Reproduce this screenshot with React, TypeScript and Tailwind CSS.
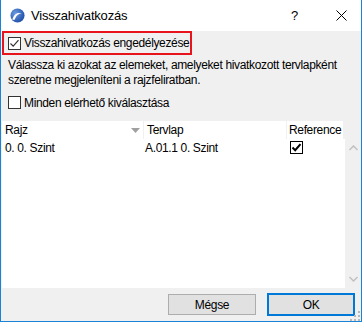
import type { FC } from 'react';

const font = { fontFamily: '"Liberation Sans", Arial, sans-serif' };

const CheckBox: FC<{ checked?: boolean; dark?: boolean }> = ({ checked, dark }) => (
  <span
    className={`flex h-[13px] w-[13px] shrink-0 items-center justify-center border bg-white ${
      dark ? 'border-black' : 'border-[#333333]'
    }`}
  >
    {checked && (
      <svg width="11" height="11" viewBox="0 0 11 11">
        <path
          d="M1.5 5.5 L4.2 8.2 L9.5 2.2"
          fill="none"
          stroke={dark ? '#000' : '#333'}
          strokeWidth={dark ? 2 : 1.2}
        />
      </svg>
    )}
  </span>
);

const AppIcon: FC = () => (
  <svg width="15" height="15" viewBox="0 0 16 16">
    <defs>
      <radialGradient id="g" cx="35%" cy="35%" r="70%">
        <stop offset="0" stopColor="#6a9be0" />
        <stop offset="1" stopColor="#1f4fa8" />
      </radialGradient>
    </defs>
    <circle cx="8" cy="8" r="7.5" fill="url(#g)" />
    <path d="M2.5 12.5 C4 6 9 3.5 13 6.5 C11 5.5 7.5 6 5 12.5 Z" fill="#ffffff" />
  </svg>
);

export default function App() {
  return (
    <div
      style={font}
      className="flex h-[322px] w-[362px] flex-col overflow-hidden whitespace-nowrap border-x border-b border-[#1883d7] bg-[#f0f0f0] text-[12px] tracking-[-0.35px] text-black"
    >
      {/* Title bar */}
      <div className="flex h-[31px] shrink-0 items-center bg-white">
        <span className="ml-[9px] flex">
          <AppIcon />
        </span>
        <span className="ml-[6px] text-[13px] leading-none tracking-[-0.2px]">Visszahivatkozás</span>
        <span className="ml-auto mr-[38px] text-[13px] leading-none">?</span>
        <svg width="11" height="11" viewBox="0 0 11 11" className="mr-[14px]">
          <path d="M0.5 0.5 L10.5 10.5 M10.5 0.5 L0.5 10.5" stroke="#000" strokeWidth="1" />
        </svg>
      </div>

      {/* Enable checkbox, highlighted */}
      <div className="ml-[1px] flex h-[24px] w-[190px] shrink-0 items-center gap-[3px] border-2 border-[#e8141c] pl-[4px]">
        <CheckBox checked />
        <span className="leading-none">Visszahivatkozás engedélyezése</span>
      </div>

      <p className="mt-[3px] ml-[7px] shrink-0 leading-[15px]">
        Válassza ki azokat az elemeket, amelyeket hivatkozott tervlapként
        <br />
        szeretne megjeleníteni a rajzfeliratban.
      </p>

      <div className="mt-[8px] ml-[7px] flex shrink-0 items-center gap-[3px]">
        <CheckBox />
        <span className="leading-none">Minden elérhető kiválasztása</span>
      </div>

      {/* Table */}
      <div className="mt-[12px] ml-[1px] flex shrink-0 flex-col">
        <div className="flex h-[18px] w-[341px]">
          <div className="relative flex w-[141px] items-center bg-white pl-[3px]">
            Rajz
            <svg width="9" height="5" viewBox="0 0 9 5" className="absolute right-[3px] top-[7px]">
              <path d="M0 0 L9 0 L4.5 5 Z" fill="#a0a0a0" />
            </svg>
          </div>
          <div className="ml-[1px] flex w-[142px] items-center bg-white pl-[3px]">Tervlap</div>
          <div className="ml-[1px] flex flex-1 items-center bg-white pl-[2px]">Reference</div>
        </div>
        <div className="flex h-[149px]">
          <div className="w-[343px] bg-white">
            <div className="flex h-[17px] items-center">
              <span className="w-[142px] pl-[3px]">0. 0. Szint</span>
              <span className="w-[146px] pl-[1px]">A.01.1 0. Szint</span>
              <CheckBox checked dark />
            </div>
          </div>
          <div className="flex flex-1 flex-col items-center justify-between py-[6px]">
            <svg width="9" height="6" viewBox="0 0 9 6">
              <path d="M0.5 5 L4.5 1 L8.5 5" fill="none" stroke="#c0c0c0" strokeWidth="1.5" />
            </svg>
            <svg width="9" height="6" viewBox="0 0 9 6">
              <path d="M0.5 1 L4.5 5 L8.5 1" fill="none" stroke="#c0c0c0" strokeWidth="1.5" />
            </svg>
          </div>
        </div>
      </div>

      {/* Buttons */}
      <div className="relative mt-[5px] flex shrink-0 justify-end gap-[11px] pr-[6px]">
        <button
          type="button"
          className="mt-[1px] h-[21px] w-[88px] border border-[#adadad] bg-[#e1e1e1] leading-none"
        >
          Mégse
        </button>
        <button
          type="button"
          className="h-[23px] w-[88px] border-2 border-[#0078d7] bg-[#e1e1e1] leading-none"
        >
          OK
        </button>
        <svg width="10" height="10" viewBox="0 0 10 10" className="absolute right-[1px] top-[18px]">
          <g fill="#b8b8b8">
            <rect x="8" y="0" width="2" height="2" />
            <rect x="4" y="4" width="2" height="2" />
            <rect x="8" y="4" width="2" height="2" />
            <rect x="0" y="8" width="2" height="2" />
            <rect x="4" y="8" width="2" height="2" />
            <rect x="8" y="8" width="2" height="2" />
          </g>
        </svg>
      </div>
    </div>
  );
}
